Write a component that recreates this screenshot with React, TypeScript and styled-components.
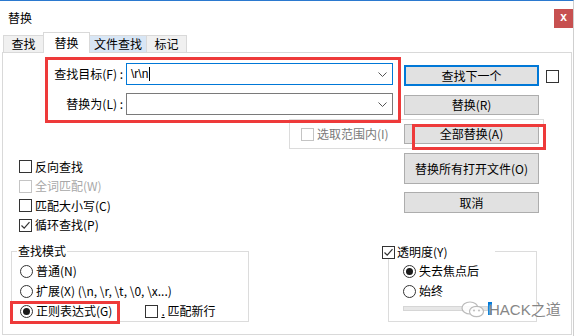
import React from 'react';
import styled, { createGlobalStyle } from 'styled-components';

const GlobalStyle = createGlobalStyle`
  html, body {
    margin: 0;
    padding: 0;
    background: #fff;
  }
  body {
    font-family: "Noto Sans CJK SC", "Liberation Sans", sans-serif;
    font-size: 12px;
    line-height: 16px;
    color: #000;
  }
`;

const Window = styled.div`
  position: relative;
  width: 574px;
  height: 336px;
  box-sizing: border-box;
  border-top: 1px solid #2b79cf;
  border-right: 1px solid #cfcfcf;
  background: #fff;
  display: flex;
  flex-direction: column;
  overflow: hidden;
`;

const TitleBar = styled.div`
  height: 31px;
  display: flex;
  align-items: flex-start;
  padding-top: 8px;
  box-sizing: border-box;
`;

const Title = styled.div`
  margin-left: 8px;
  line-height: 17px;
  flex: 1;
`;

const CloseBtn = styled.div`
  width: 19px;
  height: 19px;
  background: #c75050;
  color: #fff;
  font-family: "Liberation Sans", sans-serif;
  font-weight: bold;
  font-size: 12px;
  line-height: 17px;
  text-align: center;
`;

const TabStrip = styled.div`
  height: 20px;
  display: flex;
  align-items: flex-end;
  padding-left: 3px;
`;

const Tab = styled.div<{ $active?: boolean; $hover?: boolean; $w: number }>`
  width: ${p => p.$w}px;
  height: ${p => (p.$active ? 21 : 17)}px;
  margin-bottom: ${p => (p.$active ? -1 : 0)}px;
  margin-left: -1px;
  box-sizing: border-box;
  border: 1px solid #d9d9d9;
  border-bottom: none;
  background: ${p => (p.$active ? '#fff' : p.$hover ? '#d8e6f5' : '#f0f0f0')};
  display: flex;
  align-items: center;
  justify-content: center;
  position: ${p => (p.$active ? 'relative' : 'static')};
  z-index: ${p => (p.$active ? 1 : 0)};
  &:first-child {
    margin-left: 0;
  }
`;

const Panel = styled.div`
  margin-left: 2px;
  width: 570px;
  height: 283px;
  box-sizing: border-box;
  border: 1px solid #d9d9d9;
  display: flex;
  flex-direction: column;
`;

const TopSection = styled.div`
  margin-top: 10px;
  display: flex;
  align-items: flex-start;
`;

const FormGrid = styled.div`
  margin-left: 42px;
  display: grid;
  grid-template-columns: 78px 267px;
  grid-auto-rows: 22px;
  column-gap: 3px;
  row-gap: 8px;
`;

const FieldLabel = styled.div`
  align-self: center;
  text-align: right;
  white-space: nowrap;
`;

const Combo = styled.div<{ $focused?: boolean }>`
  box-sizing: border-box;
  border: 1px solid ${p => (p.$focused ? '#0078d7' : '#7a7a7a')};
  background: #fff;
  display: flex;
  align-items: center;
  padding: 0 5px 0 4px;
`;

const ComboText = styled.div`
  flex: 1;
  display: flex;
  align-items: center;
  font-family: "Liberation Sans", sans-serif;
`;

const Caret = styled.span`
  width: 1px;
  height: 14px;
  margin-left: 1px;
  background: #000;
`;

const ButtonCol = styled.div<{ $top: number; $auto?: boolean }>`
  margin-top: ${p => p.$top}px;
  margin-left: ${p => (p.$auto ? 'auto' : '11px')};
  margin-right: ${p => (p.$auto ? '32px' : '0')};
  display: flex;
  flex-direction: column;
  width: 135px;
`;

const Button = styled.div<{ $h: number; $gap?: number; $default?: boolean }>`
  height: ${p => p.$h}px;
  margin-top: ${p => p.$gap ?? 0}px;
  width: 135px;
  box-sizing: border-box;
  border: ${p => (p.$default ? '2px solid #0078d7' : '1px solid #adadad')};
  background: #e1e1e1;
  display: flex;
  align-items: center;
  justify-content: center;
  white-space: nowrap;
  flex-shrink: 0;
`;

const SideCheck = styled.div`
  margin: 7px 0 0 7px;
`;

const ScopeBox = styled.div`
  margin: 4px 0 0 286px;
  width: 255px;
  height: 30px;
  box-sizing: border-box;
  border: 1px solid #dcdcdc;
  display: flex;
  align-items: center;
  justify-content: space-between;
  padding: 0 4px 0 11px;
`;

const MiddleSection = styled.div`
  height: 102px;
  display: flex;
  align-items: flex-start;
`;

const CheckList = styled.div`
  margin: 8px 0 0 16px;
  display: flex;
  flex-direction: column;
`;

const OptionRow = styled.div<{ $h?: number; $color?: string; $gap?: number; $ml?: number }>`
  display: flex;
  align-items: center;
  gap: ${p => p.$gap ?? 3}px;
  height: ${p => p.$h ?? 20}px;
  margin-left: ${p => p.$ml ?? 0}px;
  color: ${p => p.$color ?? '#000'};
  white-space: nowrap;
`;

const BoxMark = styled.span<{ $disabled?: boolean }>`
  width: 13px;
  height: 13px;
  box-sizing: border-box;
  border: 1px solid ${p => (p.$disabled ? '#c4c4c4' : '#333')};
  background: #fff;
  display: flex;
  align-items: center;
  justify-content: center;
  flex-shrink: 0;
`;

const RadioMark = styled.span<{ $on?: boolean }>`
  width: 13px;
  height: 13px;
  box-sizing: border-box;
  border: 1px solid #333;
  border-radius: 50%;
  background: #fff;
  display: flex;
  align-items: center;
  justify-content: center;
  flex-shrink: 0;
  &::after {
    content: '';
    width: 7px;
    height: 7px;
    border-radius: 50%;
    background: ${p => (p.$on ? '#1a1a1a' : 'transparent')};
  }
`;

const BottomSection = styled.div`
  display: flex;
  align-items: flex-start;
`;

const GroupBox = styled.div<{ $left: number; $w: number }>`
  margin-left: ${p => p.$left}px;
  width: ${p => p.$w}px;
  height: 71px;
  box-sizing: border-box;
  border: 1px solid #dcdcdc;
  display: flex;
  flex-direction: column;
  align-items: flex-start;
`;

const GroupTitle = styled.div<{ $mt: number; $ml: number; $w?: number }>`
  margin: ${p => p.$mt}px 0 0 ${p => p.$ml}px;
  ${p => (p.$w ? `width: ${p.$w}px;` : '')}
  height: 14px;
  line-height: 14px;
  padding: 0 1px;
  background: #fff;
  display: flex;
  align-items: center;
  gap: 2px;
  white-space: nowrap;
`;

const GroupBody = styled.div<{ $ml: number; $mt: number }>`
  margin: ${p => p.$mt}px 0 0 ${p => p.$ml}px;
  display: flex;
  flex-direction: column;
`;

const Slider = styled.div`
  width: 100px;
  height: 14px;
  display: flex;
  align-items: center;
`;

const Track = styled.div`
  width: 83px;
  height: 3px;
  background: #e7e7e7;
  border: 1px solid #d6d6d6;
`;

const Thumb = styled.div`
  width: 4px;
  height: 13px;
  background: #0078d7;
`;

const Marker = styled.div`
  position: absolute;
  box-sizing: border-box;
  border: 3px solid #ee3a3a;
  pointer-events: none;
`;

const Watermark = styled.div`
  position: absolute;
  left: 461px;
  top: 300px;
  display: flex;
  align-items: center;
  gap: 4px;
  color: #7a7a7a;
  font-family: "Liberation Sans", "Noto Sans CJK SC", sans-serif;
  font-size: 15px;
  line-height: 17px;
  text-shadow: 0 0 2px #fff, 0 0 2px #fff;
  opacity: 0.9;
`;

const Check = ({ checked, disabled }: { checked?: boolean; disabled?: boolean }) => (
  <BoxMark $disabled={disabled}>
    {checked && (
      <svg width="11" height="11" viewBox="0 0 11 11">
        <path d="M1.5 5.5 L4.2 8.2 L9.5 2.2" fill="none" stroke="#333" strokeWidth="1.2" />
      </svg>
    )}
  </BoxMark>
);

const Chevron = () => (
  <svg width="9" height="5" viewBox="0 0 9 5">
    <path d="M0.5 0.5 L4.5 4.5 L8.5 0.5" fill="none" stroke="#555" strokeWidth="1" />
  </svg>
);

const WeChat = () => (
  <svg width="24" height="17" viewBox="0 0 24 17">
    <ellipse cx="9" cy="7" rx="8" ry="6" fill="#fff" stroke="#b5b5b5" strokeWidth="1.2" />
    <ellipse cx="15.5" cy="10.5" rx="7" ry="5.2" fill="#fff" stroke="#b5b5b5" strokeWidth="1.2" />
    <circle cx="13" cy="9.5" r="0.9" fill="#b5b5b5" />
    <circle cx="18" cy="9.5" r="0.9" fill="#b5b5b5" />
  </svg>
);

const tabs = [
  { name: '查找', w: 41 },
  { name: '替换', w: 47, active: true },
  { name: '文件查找', w: 58, hover: true },
  { name: '标记', w: 41 },
];

const App = () => (
  <>
    <GlobalStyle />
    <Window>
      <TitleBar>
        <Title>替换</Title>
        <CloseBtn>x</CloseBtn>
      </TitleBar>
      <TabStrip>
        {tabs.map(t => (
          <Tab key={t.name} $w={t.w} $active={t.active} $hover={t.hover}>
            {t.name}
          </Tab>
        ))}
      </TabStrip>
      <Panel>
        <TopSection>
          <FormGrid>
            <FieldLabel>查找目标(F) :</FieldLabel>
            <Combo $focused>
              <ComboText>
                \r\n
                <Caret />
              </ComboText>
              <Chevron />
            </Combo>
            <FieldLabel>替换为(L) :</FieldLabel>
            <Combo>
              <ComboText />
              <Chevron />
            </Combo>
          </FormGrid>
          <ButtonCol $top={2}>
            <Button $h={21} $default>
              查找下一个
            </Button>
            <Button $h={20} $gap={9}>
              替换(R)
            </Button>
          </ButtonCol>
          <SideCheck>
            <Check />
          </SideCheck>
        </TopSection>

        <ScopeBox>
          <OptionRow $color="#7a7a7a" $h={16}>
            <Check disabled />
            选取范围内(I)
          </OptionRow>
          <Button $h={20}>全部替换(A)</Button>
        </ScopeBox>

        <MiddleSection>
          <CheckList>
            <OptionRow $h={19.5}>
              <Check />
              反向查找
            </OptionRow>
            <OptionRow $h={19.5} $color="#a8a8a8">
              <Check disabled />
              全词匹配(W)
            </OptionRow>
            <OptionRow $h={19.5}>
              <Check />
              匹配大小写(C)
            </OptionRow>
            <OptionRow $h={19.5}>
              <Check checked />
              循环查找(P)
            </OptionRow>
          </CheckList>
          <ButtonCol $top={4} $auto>
            <Button $h={31}>替换所有打开文件(O)</Button>
            <Button $h={21} $gap={8}>
              取消
            </Button>
          </ButtonCol>
        </MiddleSection>

        <BottomSection>
          <GroupBox $left={8} $w={238}>
            <GroupTitle $mt={-8} $ml={5}>
              查找模式
            </GroupTitle>
            <GroupBody $ml={8} $mt={3}>
              <OptionRow>
                <RadioMark />
                普通(N)
              </OptionRow>
              <OptionRow>
                <RadioMark />
                扩展(X) (\n, \r, \t, \0, \x...)
              </OptionRow>
              <OptionRow>
                <RadioMark $on />
                正则表达式(G)
                <OptionRow $ml={30}>
                  <Check />
                  <span>
                    <u>.</u> 匹配新行
                  </span>
                </OptionRow>
              </OptionRow>
            </GroupBody>
          </GroupBox>
          <GroupBox $left={139} $w={149}>
            <GroupTitle $mt={-7} $ml={-8} $w={112}>
              <Check checked />
              透明度(Y)
            </GroupTitle>
            <GroupBody $ml={14} $mt={2}>
              <OptionRow>
                <RadioMark $on />
                失去焦点后
              </OptionRow>
              <OptionRow>
                <RadioMark />
                始终
              </OptionRow>
              <Slider>
                <Track />
                <Thumb />
              </Slider>
            </GroupBody>
          </GroupBox>
        </BottomSection>
      </Panel>

      <Marker style={{ left: 45, top: 56, width: 356, height: 66 }} />
      <Marker style={{ left: 412, top: 123, width: 134, height: 26 }} />
      <Marker style={{ left: 10, top: 300, width: 110, height: 23 }} />
      <Watermark>
        <WeChat />
        <span>HACK之道</span>
      </Watermark>
    </Window>
  </>
);

export default App;
